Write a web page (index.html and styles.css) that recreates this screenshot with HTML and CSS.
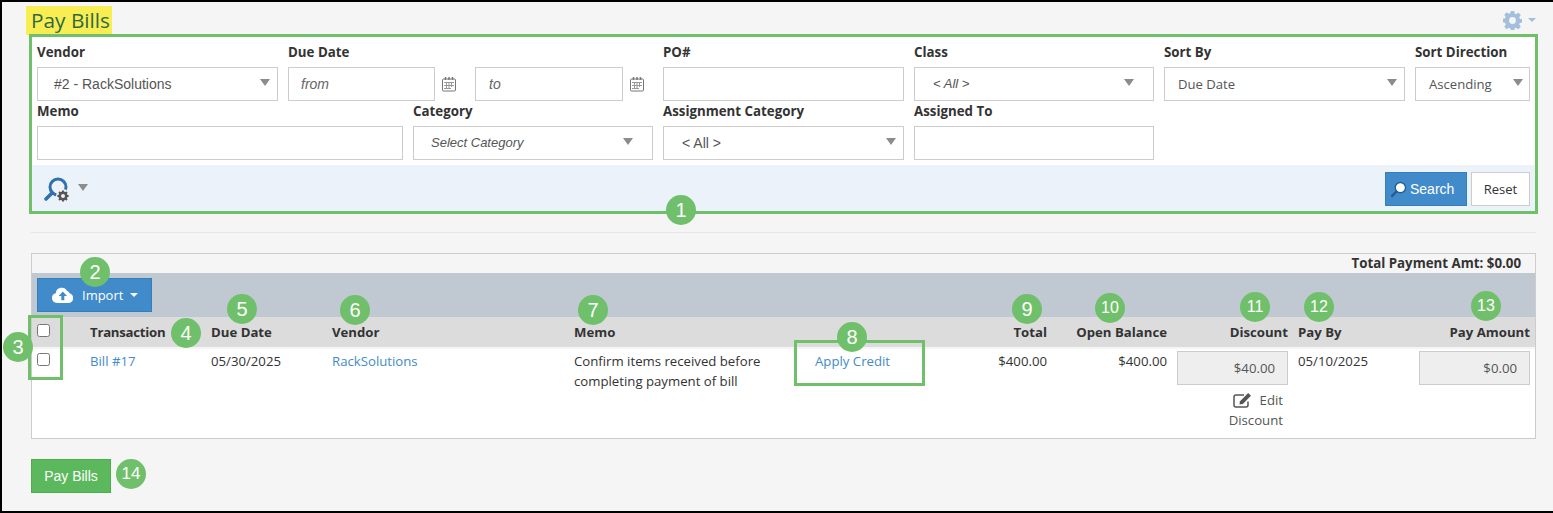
FILE: index.html
```html
<!DOCTYPE html>
<html lang="en">
<head>
<meta charset="utf-8">
<title>Pay Bills</title>
<link rel="stylesheet" href="styles.css">
</head>
<body>
<div class="page">
  <header class="title-row">
    <h1 class="title">Pay Bills</h1>
    <div class="settings">
      <svg class="gear" viewBox="0 0 20 20" aria-hidden="true"><path fill="#a3bfdc" fill-rule="evenodd" d="M8.2 0h3.6l.5 2.7 1.500.6 2.300-1.600 2.600 2.600-1.600 2.300.6 1.500 2.300.5v3.600l-2.300.5-.6 1.500 1.600 2.300-2.600 2.600-2.300-1.600-1.500.6-.5 2.300H8.200l-.5-2.300-1.500-.6-2.300 1.600-2.600-2.600 1.600-2.300-.6-1.500L0 11.800V8.200l2.300-.5.6-1.500-1.600-2.300 2.600-2.600 2.300 1.600 1.500-.6zM10 6.400a3.600 3.600 0 1 0 0 7.200a3.600 3.600 0 0 0 0-7.200z"/></svg>
      <span class="caret-small"></span>
    </div>
  </header>

  <section class="filters">
    <div class="filter-grid">
      <div class="field">
        <label class="label">Vendor</label>
        <div class="select"><span class="value arial pad-vendor">#2 - RackSolutions</span><span class="caret"></span></div>
      </div>
      <div class="field span-2">
        <label class="label">Due Date</label>
        <div class="dates">
          <div class="box date-box"><span class="placeholder">from</span></div>
          <svg class="cal" viewBox="0 0 14 16" aria-hidden="true"><path fill="none" stroke="#777" d="M1.500 3h11a1 1 0 0 1 1 1v10a1 1 0 0 1-1 1h-11a1 1 0 0 1-1-1V4a1 1 0 0 1 1-1z"/><path stroke="#777" stroke-width="1.500" d="M3.500 1v3M7 1v3M10.500 1v3"/><path stroke="#999" d="M2 6.500h10M2 9.500h10M2 12.500h7M4.500 6v7M7 6v7M9.500 6v5"/></svg>
          <div class="box date-box date-to"><span class="placeholder">to</span></div>
          <svg class="cal" viewBox="0 0 14 16" aria-hidden="true"><path fill="none" stroke="#777" d="M1.500 3h11a1 1 0 0 1 1 1v10a1 1 0 0 1-1 1h-11a1 1 0 0 1-1-1V4a1 1 0 0 1 1-1z"/><path stroke="#777" stroke-width="1.500" d="M3.500 1v3M7 1v3M10.500 1v3"/><path stroke="#999" d="M2 6.500h10M2 9.500h10M2 12.500h7M4.500 6v7M7 6v7M9.500 6v5"/></svg>
        </div>
      </div>
      <div class="field">
        <label class="label">PO#</label>
        <div class="box"></div>
      </div>
      <div class="field">
        <label class="label">Class</label>
        <div class="select select-inset"><span class="value arial italic pad-all">&lt; All &gt;</span><span class="caret"></span></div>
      </div>
      <div class="field">
        <label class="label">Sort By</label>
        <div class="select"><span class="value pad-sort">Due Date</span><span class="caret"></span></div>
      </div>
      <div class="field">
        <label class="label">Sort Direction</label>
        <div class="select"><span class="value pad-sort">Ascending</span><span class="caret caret-tight"></span></div>
      </div>

      <div class="field span-2">
        <label class="label">Memo</label>
        <div class="box"></div>
      </div>
      <div class="field">
        <label class="label">Category</label>
        <div class="select select-inset"><span class="value arial italic pad-cat">Select Category</span><span class="caret"></span></div>
      </div>
      <div class="field">
        <label class="label">Assignment Category</label>
        <div class="select"><span class="value arial pad-all">&lt; All &gt;</span><span class="caret"></span></div>
      </div>
      <div class="field">
        <label class="label">Assigned To</label>
        <div class="box"></div>
      </div>
    </div>
    <div class="search-bar">
      <div class="saved">
        <svg class="saved-icon" viewBox="0 0 26 26" aria-hidden="true">
          <circle cx="14" cy="10" r="8" fill="none" stroke="#2f70b1" stroke-width="3"/>
          <path d="M8 16 2 22" stroke="#2f70b1" stroke-width="3.500" stroke-linecap="round"/>
          <circle cx="19" cy="19" r="7" fill="#ebf2fa"/>
          <circle cx="19" cy="19" r="3.300" fill="none" stroke="#555" stroke-width="2.600"/>
          <path d="M19 13.400v2.200M19 22.400v2.200M13.400 19h2.200M22.400 19h2.200M15 15l1.600 1.600M21.400 21.400l1.600 1.600M23 15l-1.600 1.600M16.600 21.400 15 23" stroke="#555" stroke-width="2"/>
        </svg>
        <span class="caret"></span>
      </div>
      <div class="actions">
        <button class="btn btn-search" type="button">
          <svg class="search-icon" viewBox="0 0 18 18" aria-hidden="true"><circle cx="11" cy="7" r="5.500" fill="#fff" stroke="#235d94" stroke-width="1.500"/><path d="M7 11 1.500 16.500" stroke="#235d94" stroke-width="2.500"/></svg>
          Search
        </button>
        <button class="btn btn-reset" type="button">Reset</button>
      </div>
    </div>
  </section>

  <hr class="divider">

  <section class="panel">
    <div class="total">Total Payment Amt: $0.00</div>
    <div class="toolbar">
      <button class="btn btn-import" type="button">
        <svg class="cloud" viewBox="0 0 22 16" aria-hidden="true"><path fill="#fff" d="M5 16a5 5 0 0 1-1.200-9.850A6 6 0 0 1 15 3.800a4 4 0 0 1 2.600 2.500A5 5 0 0 1 17 16z"/><path fill="#428bca" d="M10.800 4.500 15 9h-2.700v4.200H9.300V9H6.600z"/></svg>
        <span>Import</span>
        <span class="caret-white"></span>
      </button>
    </div>
    <div class="grid grid-head">
      <input class="check" type="checkbox" aria-label="Select all">
      <div class="tight">Transaction</div>
      <div>Due Date</div>
      <div>Vendor</div>
      <div>Memo</div>
      <div></div>
      <div class="right">Total</div>
      <div class="right">Open Balance</div>
      <div class="right">Discount</div>
      <div>Pay By</div>
      <div class="right">Pay Amount</div>
    </div>
    <div class="grid grid-row">
      <input class="check check-row" type="checkbox" aria-label="Select Bill #17">
      <a class="link">Bill #17</a>
      <div>05/30/2025</div>
      <a class="link">RackSolutions</a>
      <div>Confirm items received before completing payment of bill</div>
      <a class="link">Apply Credit</a>
      <div class="right">$400.00</div>
      <div class="right">$400.00</div>
      <div>
        <div class="amount">$40.00</div>
        <div class="edit">
          <svg class="edit-icon" viewBox="0 0 20 16" aria-hidden="true"><path fill="none" stroke="#555" stroke-width="1.500" d="M15 9.500V13a2 2 0 0 1-2 2H3a2 2 0 0 1-2-2V5a2 2 0 0 1 2-2h8"/><path fill="#555" d="M7 9.200 15.200 1l2.800 2.800L9.800 12 6.500 12.500z"/></svg>
          Edit<br>Discount
        </div>
      </div>
      <div>05/10/2025</div>
      <div class="amount">$0.00</div>
    </div>
  </section>

  <button class="btn btn-pay" type="button">Pay Bills</button>
</div>

<div class="mark mark-check"></div>
<div class="mark mark-credit"></div>
<span class="badge b1">1</span>
<span class="badge b2">2</span>
<span class="badge b3">3</span>
<span class="badge b4">4</span>
<span class="badge b5">5</span>
<span class="badge b6">6</span>
<span class="badge b7">7</span>
<span class="badge b8">8</span>
<span class="badge b9">9</span>
<span class="badge b10">10</span>
<span class="badge b11">11</span>
<span class="badge b12">12</span>
<span class="badge b13">13</span>
<span class="badge b14">14</span>
</body>
</html>
```
FILE: styles.css
```css
* { box-sizing: border-box; }
html, body { margin: 0; padding: 0; }
body {
  position: relative;
  width: 1553px;
  height: 513px;
  overflow: hidden;
  font-family: "Open Sans", sans-serif;
  font-size: 13.200px;
  line-height: 20px;
  color: #333;
  background: #f5f5f5;
}
.page {
  height: 513px;
  border-top: 2px solid #000;
  border-left: 2px solid #000;
  border-bottom: 2px solid #000;
  padding: 0 15px 0 27px;
}

/* Title */
.title-row {
  display: flex;
  justify-content: space-between;
  height: 32px;
}
.title {
  margin: 4px 0 0 -3px;
  width: 86px;
  height: 29px;
  padding: 0 0 0 5px;
  font-size: 20.800px;
  line-height: 28px;
  font-weight: 400;
  white-space: nowrap;
  color: #2f6a42;
  background: #f8ee54;
}
.settings { display: flex; align-items: center; gap: 6px; margin: 0 2px 0 0; height: 36px; }
.gear { width: 19px; height: 19px; }
.caret-small {
  width: 0; height: 0;
  border-left: 4px solid transparent;
  border-right: 4px solid transparent;
  border-top: 4px solid #a3bfdc;
}

/* Filters */
.filters {
  position: relative;
  border: 3px solid #6fbf6b;
  background: #fff;
}
.filter-grid {
  display: grid;
  grid-template-columns: 241px 115px 240px 241px 240px 241px 115px;
  column-gap: 10px;
  padding: 5px 5px 5px;
}
.span-2 { grid-column: span 2; }
.label { display: block; height: 25px; font-size: 13.300px; font-weight: 700; color: #333; }
.box, .select {
  height: 34px;
  border: 1px solid #ccc;
  background: #fff;
}
.select { display: flex; align-items: center; justify-content: space-between; padding-right: 7px; }
.select-inset { padding-right: 19px; }
.value { color: #555; white-space: nowrap; }
.arial { font-family: "Liberation Sans", sans-serif; font-size: 14px; }
.italic { font-style: italic; font-size: 13px; }
.pad-vendor { padding-left: 16px; }
.pad-all { padding-left: 18px; }
.pad-cat { padding-left: 17px; font-size: 13px; }
.pad-sort { padding-left: 13px; font-size: 13.100px; }
.caret {
  width: 0; height: 0;
  margin-top: -3px;
  border-left: 5px solid transparent;
  border-right: 5px solid transparent;
  border-top: 7px solid #8c8c8c;
}
.caret-tight { margin-right: -1px; }
.dates { display: flex; align-items: center; }
.date-box { width: 147px; display: flex; align-items: center; padding-left: 12px; }
.date-to { width: 148px; margin-left: 19px; padding-left: 13px; }
.placeholder { font-family: "Liberation Sans", sans-serif; font-size: 14px; font-style: italic; color: #666; }
.cal { width: 14px; height: 16px; margin-left: 7px; }
.search-bar {
  height: 46px;
  background: #ebf2fa;
  display: flex;
  justify-content: space-between;
  padding: 7px 5px 5px 12px;
}
.saved { display: flex; align-items: center; gap: 8px; height: 34px; }
.saved-icon { width: 26px; height: 26px; margin-top: 2px; }
.actions { display: flex; gap: 4px; }

/* Buttons */
.btn {
  height: 34px;
  border: 1px solid #ccc;
  background: #fff;
  font: 13px/20px "Open Sans", sans-serif;
  color: #333;
  padding: 0;
}
.btn-search {
  width: 82px;
  display: flex;
  align-items: center;
  gap: 3px;
  padding-left: 4px;
  background: #428bca;
  border-color: #357ebd;
  color: #fff;
  font-family: "Liberation Sans", sans-serif;
  font-size: 14px;
}
.search-icon { width: 17px; height: 17px; }
.btn-reset { width: 59px; }
.btn-import {
  width: 115px;
  display: flex;
  align-items: center;
  background: #428bca;
  border-color: #357ebd;
  color: #fff;
  padding-left: 14px;
}
.cloud { width: 22px; height: 16px; margin-right: 8px; }
.caret-white {
  width: 0; height: 0;
  margin-left: 7px;
  border-left: 4px solid transparent;
  border-right: 4px solid transparent;
  border-top: 4px solid #fff;
}
.btn-pay {
  display: block;
  width: 80px;
  margin: 20px 0 0 2px;
  background: #5cb85c;
  border-color: #4cae4c;
  color: #fff;
  font-family: "Liberation Sans", sans-serif;
  font-size: 14px;
}

.divider {
  margin: 18px 2px 20px;
  border: 0;
  border-top: 1px solid #e6e6e6;
  height: 1px;
}

/* Table panel */
.panel {
  margin: 0 2px;
  height: 186px;
  border: 1px solid #ccc;
  background: #fff;
}
.total {
  height: 19px;
  line-height: 18px;
  padding-right: 14px;
  text-align: right;
  font-size: 13.300px;
  font-weight: 700;
  background: #f5f5f5;
}
.toolbar { height: 44px; padding: 5px; background: #c0c8d2; }
.grid {
  display: grid;
  grid-template-columns: 43px 111px 111px 232px 231px 122px 100px 110px 111px 111px 111px;
  column-gap: 10px;
  padding: 0 5px;
}
.grid-head {
  height: 30px;
  align-items: center;
  font-weight: 700;
  background: #dcdcdc;
  margin-bottom: 2px;
  box-shadow: 0 2px 0 #f5f5f5;
}
.tight { letter-spacing: -0.250px; }
.grid-row { padding-top: 2px; }
.check { width: 13px; height: 13px; margin: 0; }
.grid-head .check { align-self: start; margin-top: 7px; }
.check-row { margin-top: 2px; }
.right { text-align: right; }
.link { color: #428bca; text-decoration: none; }
.amount {
  height: 34px;
  border: 1px solid #ccc;
  background: #eee;
  color: #555;
  text-align: right;
  line-height: 32px;
  padding-right: 12px;
}
.edit { margin-top: 5px; padding-right: 5px; text-align: right; color: #555; }
.edit-icon { width: 20px; height: 16px; margin-right: 3px; vertical-align: -3px; }

/* Annotations laid over the screenshot */
.mark { position: absolute; border: 3px solid #6fbf6b; }
.mark-check { left: 28px; top: 315px; width: 35px; height: 65px; }
.mark-credit { left: 794px; top: 340px; width: 131px; height: 46px; }
.badge {
  position: absolute;
  width: 30px;
  height: 30px;
  border-radius: 50%;
  background: #6fbf6b;
  color: #fff;
  font-family: "Liberation Sans", sans-serif;
  font-size: 20px;
  line-height: 30px;
  text-align: center;
}
.b1 { left: 666px; top: 195px; }
.b2 { left: 80px; top: 257px; }
.b3 { left: 3px; top: 332px; }
.b4 { left: 171px; top: 318px; }
.b5 { left: 227px; top: 294px; }
.b6 { left: 340px; top: 295px; }
.b7 { left: 578px; top: 295px; }
.b8 { left: 837px; top: 322px; }
.b9 { left: 1012px; top: 294px; }
.b10 { left: 1095px; top: 293px; font-size: 16px; }
.b11 { left: 1240px; top: 292px; font-size: 16px; }
.b12 { left: 1304px; top: 292px; font-size: 16px; }
.b13 { left: 1471px; top: 291px; font-size: 16px; }
.b14 { left: 116px; top: 459px; font-size: 17px; }
```
